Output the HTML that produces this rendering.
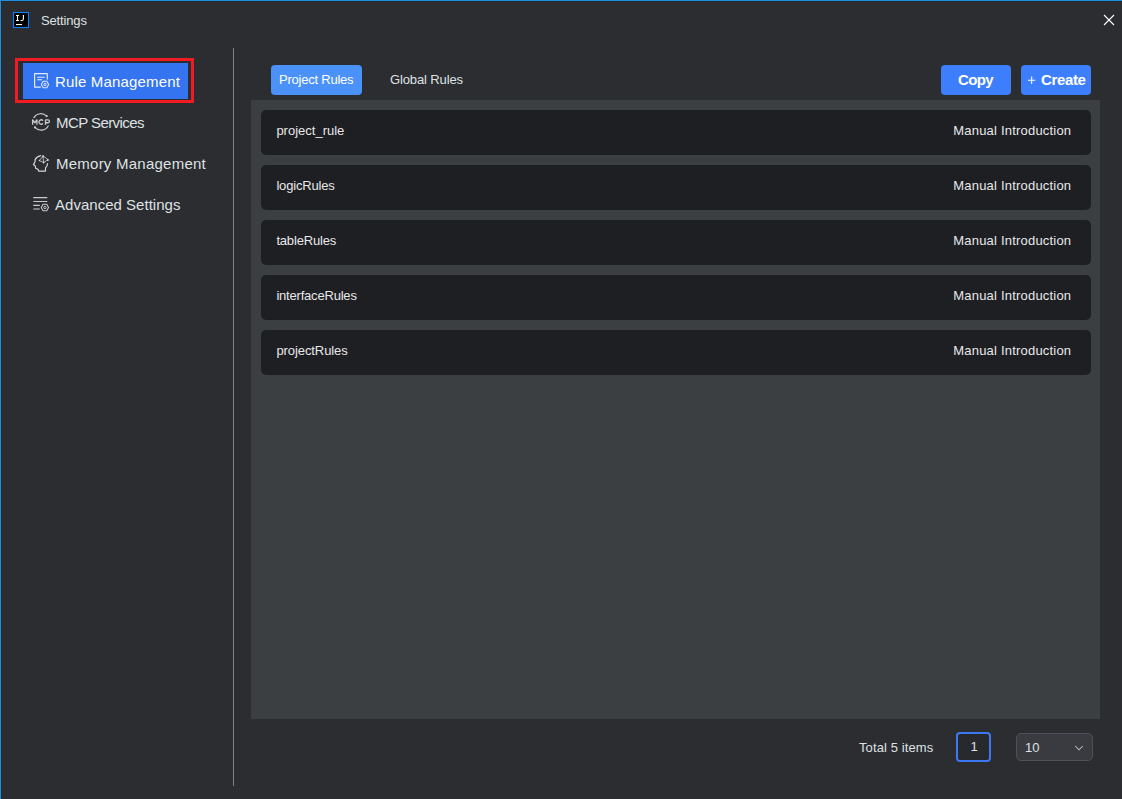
<!DOCTYPE html>
<html><head><meta charset="utf-8">
<style>
html,body{margin:0;padding:0;}
body{width:1122px;height:799px;overflow:hidden;background:#2b2d30;position:relative;font-family:"Liberation Sans",sans-serif;color:#dfe1e5;}
.abs{position:absolute;}
.t{position:absolute;white-space:nowrap;line-height:1;}
#bt{left:0;top:0;width:1122px;height:1px;background:#1a8fe8;}
#bl{left:0;top:0;width:1px;height:799px;background:#1a8fe8;}
#ij{left:13px;top:12px;width:14px;height:14px;border:1px solid #1883f5;background:#000;}
#div{left:233px;top:48px;width:1px;height:738px;background:#76838f;}
#red{left:15px;top:58px;width:173px;height:39px;border:3px solid #f21b22;}
#sel{left:23px;top:63px;width:165px;height:36px;background:#3574f0;}
.nav{font-size:15px;left:56px;color:#dfe1e5;}
#tab1{left:271px;top:65px;width:91px;height:30px;border-radius:4px;background:#4b91fa;}
.btn{background:#3d7efc;border-radius:4px;height:30px;top:65px;}
#panel{left:251px;top:100px;width:849px;height:619px;background:#3c3f41;}
.item{left:261px;width:830px;height:45px;border-radius:5px;background:#1e1f22;}
.nm{font-size:13px;left:276.4px;color:#e8e8ea;}
.mi{font-size:13px;left:953.3px;color:#e8e8ea;letter-spacing:0.2px;}
#pg1{left:956px;top:732px;width:31px;height:26px;background:#27292c;border:2px solid #3b78f2;border-radius:4px;}
#sel10{left:1016px;top:733px;width:75px;height:26px;border:1px solid #4e5157;border-radius:5px;background:#393b40;}
</style></head><body>
<div class="abs" style="left:1px;top:1px;width:1121px;height:1px;background:#2c2927"></div><div class="abs" style="left:1px;top:1px;width:1px;height:798px;background:#2c2927"></div><div class="abs" id="bt"></div><div class="abs" id="bl"></div>
<span class="t" id="ttl" style="left:41px;top:14px;font-size:13px;letter-spacing:-0.15px">Settings</span>
<div class="abs" id="div"></div>
<div class="abs" id="red"></div>
<div class="abs" id="sel"></div>
<span class="t nav" id="n1" style="top:74px;left:55px;color:#fff;letter-spacing:0.17px">Rule Management</span>
<span class="t nav" id="n2" style="top:115px;letter-spacing:-0.57px">MCP Services</span>
<span class="t nav" id="n3" style="top:156px;letter-spacing:0.24px">Memory Management</span>
<span class="t nav" id="n4" style="top:197px;left:55px;letter-spacing:0.02px">Advanced Settings</span>
<div class="abs" id="tab1"></div>
<span class="t" id="tb1" style="left:279px;top:73px;font-size:13px;color:#fff;letter-spacing:-0.23px">Project Rules</span>
<span class="t" id="tb2" style="left:390px;top:73px;font-size:13px;letter-spacing:-0.13px">Global Rules</span>
<div class="abs btn" id="b1" style="left:941px;width:70px"></div>
<div class="abs btn" id="b2" style="left:1021px;width:70px"></div>
<span class="t" id="bt1" style="left:958px;top:72px;font-size:15px;font-weight:bold;color:#fff;letter-spacing:-0.6px">Copy</span>
<span class="t" id="bt2" style="left:1041px;top:72px;font-size:15px;font-weight:bold;color:#fff;letter-spacing:-0.35px">Create</span>
<div class="abs" id="panel"></div>
<div class="abs item" style="top:110px"></div>
<div class="abs item" style="top:165px"></div>
<div class="abs item" style="top:220px"></div>
<div class="abs item" style="top:275px"></div>
<div class="abs item" style="top:330px"></div>
<span class="t nm" id="i1" style="top:124px">project_rule</span>
<span class="t nm" id="i2" style="top:179px;letter-spacing:-0.17px">logicRules</span>
<span class="t nm" id="i3" style="top:234px;letter-spacing:-0.18px">tableRules</span>
<span class="t nm" id="i4" style="top:289px;letter-spacing:-0.2px">interfaceRules</span>
<span class="t nm" id="i5" style="top:344px;letter-spacing:-0.08px">projectRules</span>
<span class="t mi" id="m1" style="top:124px">Manual Introduction</span>
<span class="t mi" id="m2" style="top:179px">Manual Introduction</span>
<span class="t mi" id="m3" style="top:234px">Manual Introduction</span>
<span class="t mi" id="m4" style="top:289px">Manual Introduction</span>
<span class="t mi" id="m5" style="top:344px">Manual Introduction</span>
<span class="t" id="tot" style="left:859px;top:741px;font-size:13px;letter-spacing:0.1px">Total 5 items</span>
<div class="abs" id="pg1"></div>
<span class="t" id="pgn" style="left:970.6px;top:740px;font-size:13px;">1</span>
<div class="abs" id="sel10"></div>
<span class="t" id="s10" style="left:1025px;top:741px;font-size:13px;">10</span>
<svg class="abs" id="ov" style="left:0;top:0" width="1122" height="799" viewBox="0 0 1122 799">
<!-- IJ logo -->
<rect x="13.5" y="12.5" width="15" height="15" fill="#000" stroke="#0a84ff" stroke-width="1.1"/>
<path d="M16 15.5 H19 M17.5 15.5 V20.5 M16 20.5 H19 M23.4 15 V19 Q23.4 20.5 21.8 20.5 H20.6" stroke="#fff" stroke-width="1.1" fill="none"/>
<rect x="16" y="24" width="6" height="1.1" fill="#fff"/>
<!-- close -->
<path d="M1104 15 L1114 25 M1114 15 L1104 25" stroke="#fff" stroke-width="1.1" fill="none"/>
<!-- icon1 rule -->
<g stroke="#e4ebff" fill="none" stroke-width="1.2" stroke-linejoin="round">
<path d="M47.3 79.6 V73.7 H34.6 V87.1 H40.8"/>
<path d="M37.2 77.3 H44.7 M37.2 79.7 H42.1" stroke-width="1.1"/>
</g>
<g transform="translate(45 84.5)" stroke="#e4ebff" fill="none" stroke-width="1.05" stroke-linejoin="round"><path d="M-1.85 -3.3 H1.85 L3.65 0 L1.85 3.3 H-1.85 L-3.65 0 Z"/><circle r="1.2" stroke-width="1"/></g>
<!-- icon2 MCP -->
<g stroke="#c9cacd" fill="none" stroke-width="1.2" stroke-linecap="round">
<path d="M33.9 117.6 A8 8 0 0 1 46.6 116.2"/>
<path d="M48.2 126.0 A8 8 0 0 1 35.1 127.4"/>
</g>
<circle cx="46.7" cy="116.1" r="1.1" fill="#c9cacd"/><circle cx="35" cy="127.4" r="1.1" fill="#c9cacd"/>
<g stroke="#c9cacd" fill="none" stroke-width="1.3" stroke-linejoin="bevel"><path d="M32.6 124.7 V119.6 L34.75 122.9 L36.9 119.6 V124.7"/><path d="M43.0 120.7 A2.3 2.1 0 1 0 43.0 123.3"/><path d="M45.5 124.7 V119.95 H48 A1.4 1.4 0 0 1 48 122.75 H45.5"/></g>
<!-- icon3 memory -->
<g stroke="#d4d5d8" fill="none" stroke-width="1.2" stroke-linejoin="round" stroke-linecap="round">
<path d="M40.6 155.7 Q36.4 156.6 34.9 160 L35.2 161.5 L33.4 164.6 L35.3 165.9 L35.6 168.3 L38.1 169.4 L38.6 171.1 H45.5 V167.8 Q47.6 166.3 47.5 163.6"/>
<path d="M43 156.3 L39.4 160.5 L43.6 162.5 L47.8 159.9 Z M43 156.3 L43.6 162.5" stroke-width="0.8"/>
</g>
<circle cx="43" cy="156.3" r="1.1" fill="#d4d5d8"/><circle cx="47.8" cy="159.9" r="1" fill="#d4d5d8"/><circle cx="43.6" cy="162.6" r="0.9" fill="#d4d5d8"/><circle cx="39.4" cy="160.5" r="0.7" fill="#d4d5d8"/>
<!-- icon4 advanced -->
<g stroke="#c9cacd" fill="none" stroke-width="1.2">
<path d="M33.3 197.7 H47.3 M33.3 201.5 H47.3 M33.3 205.3 H39.8"/>
<path d="M33.3 209 H39.8" stroke-width="1.5" stroke-opacity="0.7"/>
</g>
<g transform="translate(44.9 207.5)" stroke="#c9cacd" fill="none" stroke-width="1.05" stroke-linejoin="round"><path d="M-1.85 -3.3 H1.85 L3.65 0 L1.85 3.3 H-1.85 L-3.65 0 Z"/><circle r="1.2" stroke-width="1"/></g>
<!-- plus -->
<path d="M1028 80.2 H1035.3 M1031.65 76.5 V83.9" stroke="#fff" stroke-width="1.1"/>
<!-- chevron -->
<path d="M1075.2 746 L1079 749.8 L1082.8 746" stroke="#bcbec2" stroke-width="1.05" fill="none"/>
</svg>
</body></html>
